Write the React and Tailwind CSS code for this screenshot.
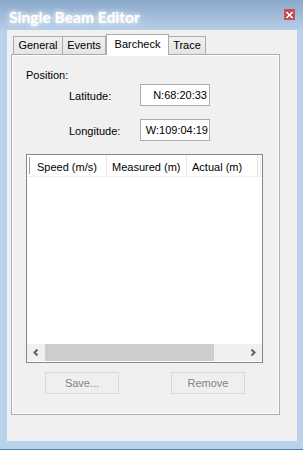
import React from "react";

function Tab({ label, w, selected, first }) {
  if (selected) {
    return (
      <div
        className={`relative z-10 h-[21px] ${w} border border-b-0 border-[#acacac] bg-white flex items-start justify-center pt-[3px] text-[11px] leading-[13px] text-black`}
      >
        {label}
      </div>
    );
  }
  return (
    <div
      className={`mt-[2px] h-[18px] ${w} ${first ? "" : "-ml-px"} border border-b-0 border-[#acacac] bg-[linear-gradient(to_bottom,#f0f0f0,#e5e5e5)] flex items-start justify-center pt-[2px] text-[11px] leading-[13px] text-black`}
    >
      {label}
    </div>
  );
}

export default function App() {
  return (
    <div className="w-[303px] h-[450px] flex flex-col bg-[linear-gradient(to_bottom,#8aa8ca_0px,#b9d1ea_32px)] font-['Liberation_Sans',Arial,sans-serif] text-[11px] leading-[13px] text-black overflow-hidden">
      {/* title bar */}
      <div className="h-[30px] flex items-start justify-between shrink-0">
        <div className="pl-[9px] pt-[8px] font-['Lato',sans-serif] font-bold text-[15.6px] leading-[18px] text-white [text-shadow:0_0_4px_rgba(255,255,255,0.95),0_0_8px_rgba(255,255,255,0.6)]">
          Single Beam Editor
        </div>
        <div className="mt-[9px] mr-[8px] w-[11px] h-[11px] bg-[#c75050] flex items-center justify-center">
          <svg width="7" height="6" viewBox="0 0 7 6" shapeRendering="crispEdges">
            <path
              fill="#fff"
              d="M0 0h2v1h1v1h1V1h1V0h2v1H6v1H5v2h1v1h1v1H5V5H4V4H3v1H2v1H0V5h1V4h1V2H1V1H0z"
            />
          </svg>
        </div>
      </div>

      {/* client area */}
      <div className="ml-[7px] mr-[6px] h-[411px] shrink-0 bg-[#f0f0f0] pt-[4px] pl-[4px]">
        {/* tabs */}
        <div className="h-[20px] flex items-start pl-[2px]">
          <Tab label="General" w="w-[50px]" first />
          <Tab label="Events" w="w-[44px]" />
          <Tab label="Barcheck" w="w-[63px]" selected />
          <Tab label="Trace" w="w-[38px]" />
        </div>
        {/* panel */}
        <div className="w-[269px] h-[361px] border border-[#acacac] bg-[#f0f0f0] shadow-[inset_1px_1px_0_#ffffff,inset_-1px_-1px_0_#ffffff] flex flex-col">
          <div className="mt-[13px] pl-[14px] h-[14px] leading-[14px]">Position:</div>

          <div className="mt-[2px] flex items-center h-[22px] pl-[57px]">
            <div className="w-[71px] pt-[2px]">Latitude:</div>
            <div className="w-[70px] h-[22px] border border-[#acacac] bg-white flex items-center justify-end pr-[2px] leading-[13px]">
              N:68:20:33
            </div>
          </div>

          <div className="mt-[13px] flex items-center h-[22px] pl-[57px]">
            <div className="w-[71px] pt-[2px]">Longitude:</div>
            <div className="w-[70px] h-[22px] border border-[#acacac] bg-white flex items-center justify-end pr-[1px] leading-[13px]">
              W:109:04:19
            </div>
          </div>

          {/* list */}
          <div className="mt-[13px] ml-[14px] w-[237px] h-[209px] border border-[#828790] bg-white flex flex-col">
            <div className="h-[22px] flex items-stretch border-b border-[#f0f0f0] shrink-0">
              <div className="w-[2px]" />
              <div className="w-px my-[2px] bg-[#a0a0a0]" />
              <div className="w-[76px] pl-[7px] flex items-center pt-[3px]">Speed (m/s)</div>
              <div className="w-px bg-[#e5e5e5]" />
              <div className="w-[79px] pl-[5px] flex items-center pt-[3px]">Measured (m)</div>
              <div className="w-px bg-[#e5e5e5]" />
              <div className="w-[70px] pl-[5px] flex items-center pt-[3px]">Actual (m)</div>
              <div className="w-px bg-[#e5e5e5]" />
              <div className="w-[2px]" />
              <div className="w-px bg-[#eeeeee]" />
            </div>
            <div className="flex-1" />
            {/* horizontal scrollbar */}
            <div className="h-[17px] flex items-stretch bg-[#f0f0f0] shrink-0 mb-[1px]">
              <div className="w-[18px] flex items-center justify-center">
                <svg width="6" height="7" viewBox="0 0 6 7">
                  <path d="M4.5 0.5 L1.5 3.5 L4.5 6.5" fill="none" stroke="#606060" strokeWidth="2" />
                </svg>
              </div>
              <div className="w-[169px] bg-[#cdcdcd]" />
              <div className="flex-1" />
              <div className="w-[18px] flex items-center justify-center">
                <svg width="6" height="7" viewBox="0 0 6 7">
                  <path d="M1.5 0.5 L4.5 3.5 L1.5 6.5" fill="none" stroke="#606060" strokeWidth="2" />
                </svg>
              </div>
            </div>
          </div>

          {/* buttons */}
          <div className="mt-[9px] flex pl-[33px] gap-[52px]">
            <div className="w-[74px] h-[22px] border border-[#d9d9d9] bg-[#efefef] flex items-center justify-center text-[#838383]">
              Save...
            </div>
            <div className="w-[74px] h-[22px] border border-[#d9d9d9] bg-[#efefef] flex items-center justify-center text-[#838383]">
              Remove
            </div>
          </div>
        </div>
      </div>
      <div className="flex-1" />
      <div className="h-px bg-[#4e7fa8] shrink-0" />
    </div>
  );
}
